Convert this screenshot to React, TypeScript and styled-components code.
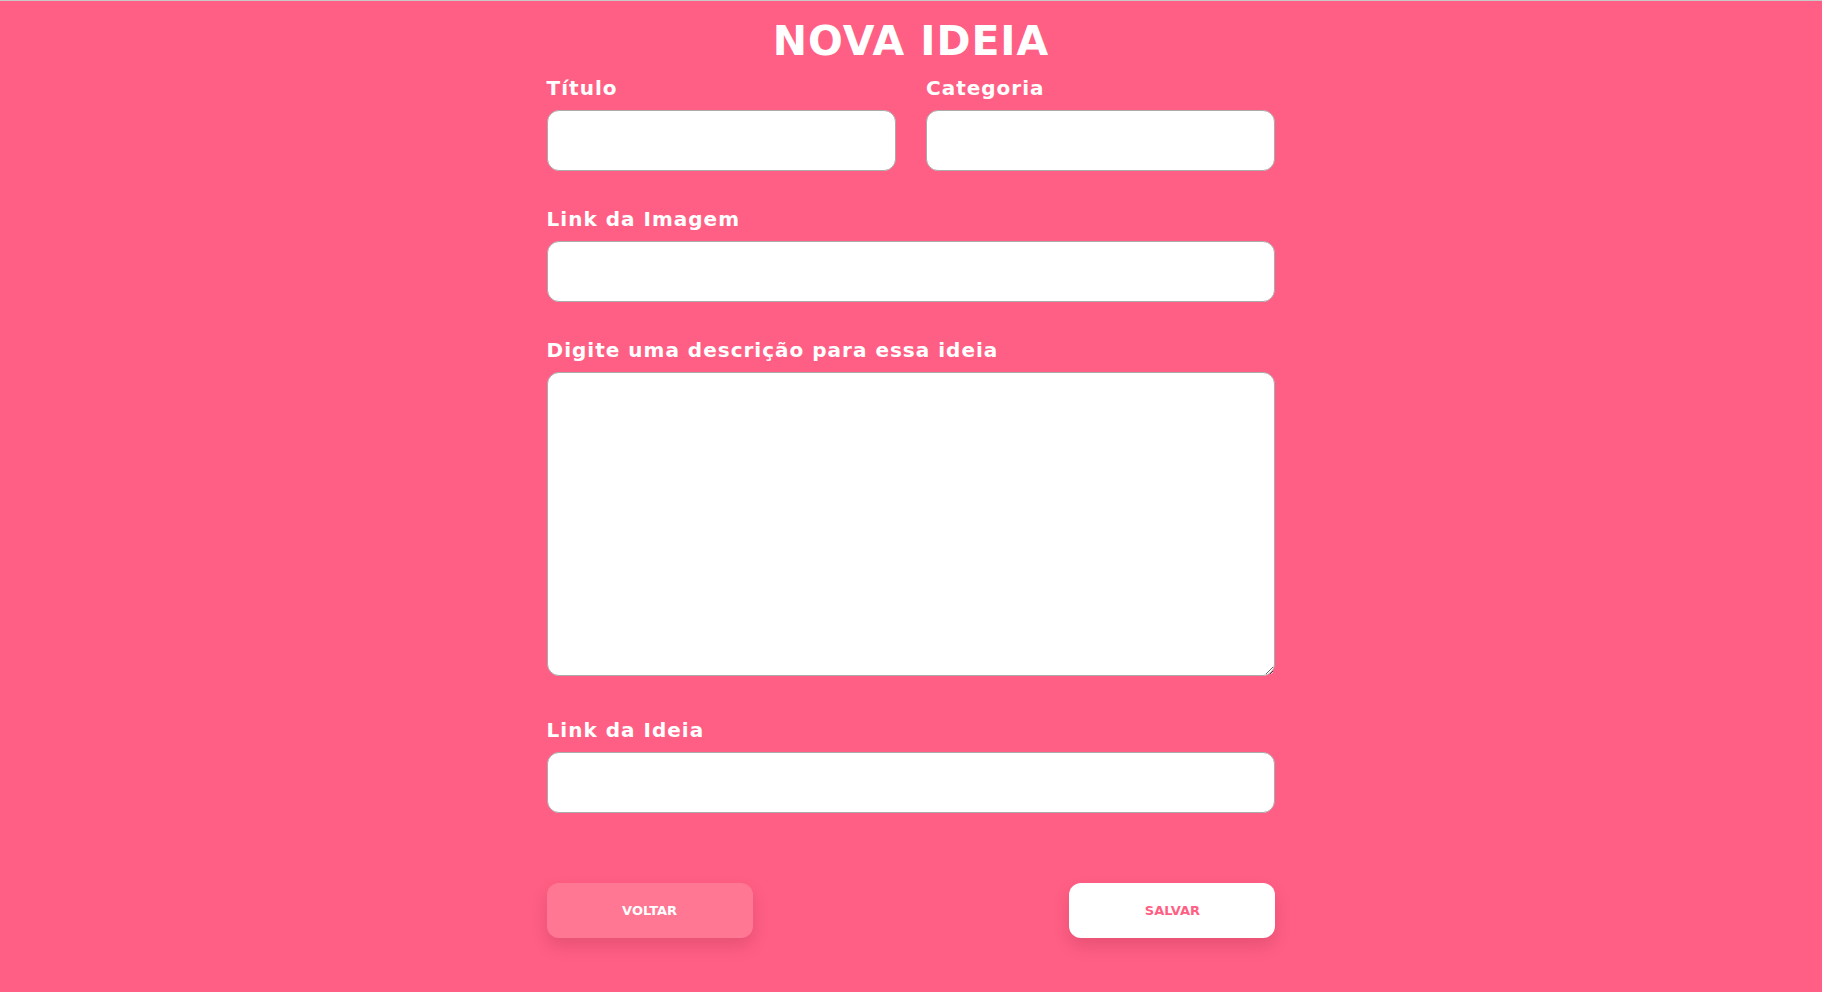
import React from "react";
import styled, { createGlobalStyle } from "styled-components";

const GlobalStyle = createGlobalStyle`
  html, body {
    margin: 0;
    padding: 0;
  }
  body {
    font-family: "DejaVu Sans", Verdana, sans-serif;
    background: #ff5f84;
  }
  * { box-sizing: border-box; }
`;

const Page = styled.div`
  min-height: 100vh;
  background: #ff5f84;
  border-top: 1px solid #c8c8c8;
`;

const Form = styled.form`
  width: 40%;
  margin: 0 auto;
  padding-top: 19px;
  padding-bottom: 40px;
`;

const Heading = styled.h1`
  margin: 0 0 14px;
  text-align: center;
  color: #ffffff;
  font-family: "DejaVu Sans", Verdana, sans-serif;
  font-weight: 700;
  font-size: 41px;
  line-height: 42px;
  letter-spacing: 0.9px;
`;

const Row = styled.div`
  display: grid;
  grid-template-columns: 1fr 1fr;
  column-gap: 30px;
`;

const Field = styled.div<{ $after?: number }>`
  display: flex;
  flex-direction: column;
  margin-bottom: ${(p) => p.$after ?? 36}px;
`;

const Label = styled.label`
  display: block;
  color: #ffffff;
  font-family: "DejaVu Sans", Verdana, sans-serif;
  font-weight: 700;
  font-size: 20px;
  line-height: 24px;
  letter-spacing: 1px;
  margin-bottom: 10px;
`;

const TextInput = styled.input`
  display: block;
  width: 100%;
  height: 61px;
  border: 1px solid #ababab;
  border-radius: 12px;
  background: #ffffff;
  padding: 0 16px;
  font-size: 18px;
  outline: none;
`;

const TextArea = styled.textarea`
  display: block;
  width: 100%;
  height: 304px;
  border: 1px solid #ababab;
  border-radius: 12px;
  background: #ffffff;
  padding: 12px 16px;
  font-size: 18px;
  outline: none;
`;

const Actions = styled.div`
  display: flex;
  justify-content: space-between;
  margin-top: 70px;
`;

const Button = styled.button<{ $primary?: boolean }>`
  width: 206px;
  height: 55px;
  border: none;
  border-radius: 12px;
  cursor: pointer;
  font-family: "DejaVu Sans", Verdana, sans-serif;
  font-weight: 700;
  font-size: 13px;
  letter-spacing: 0;
  background: ${(p) => (p.$primary ? "#ffffff" : "#ff7793")};
  color: ${(p) => (p.$primary ? "#ff5f84" : "#ffffff")};
  box-shadow: 0 8px 16px rgba(120, 20, 50, 0.18);
`;

export default function App() {
  return (
    <>
      <GlobalStyle />
      <Page>
        <Form onSubmit={(e) => e.preventDefault()}>
          <Heading>NOVA IDEIA</Heading>
          <Row>
            <Field>
              <Label htmlFor="titulo">Título</Label>
              <TextInput id="titulo" type="text" />
            </Field>
            <Field>
              <Label htmlFor="categoria">Categoria</Label>
              <TextInput id="categoria" type="text" />
            </Field>
          </Row>
          <Field>
            <Label htmlFor="imagem">Link da Imagem</Label>
            <TextInput id="imagem" type="text" />
          </Field>
          <Field $after={42}>
            <Label htmlFor="descricao">Digite uma descrição para essa ideia</Label>
            <TextArea id="descricao" />
          </Field>
          <Field $after={0}>
            <Label htmlFor="link">Link da Ideia</Label>
            <TextInput id="link" type="text" />
          </Field>
          <Actions>
            <Button type="button">VOLTAR</Button>
            <Button type="submit" $primary>
              SALVAR
            </Button>
          </Actions>
        </Form>
      </Page>
    </>
  );
}
